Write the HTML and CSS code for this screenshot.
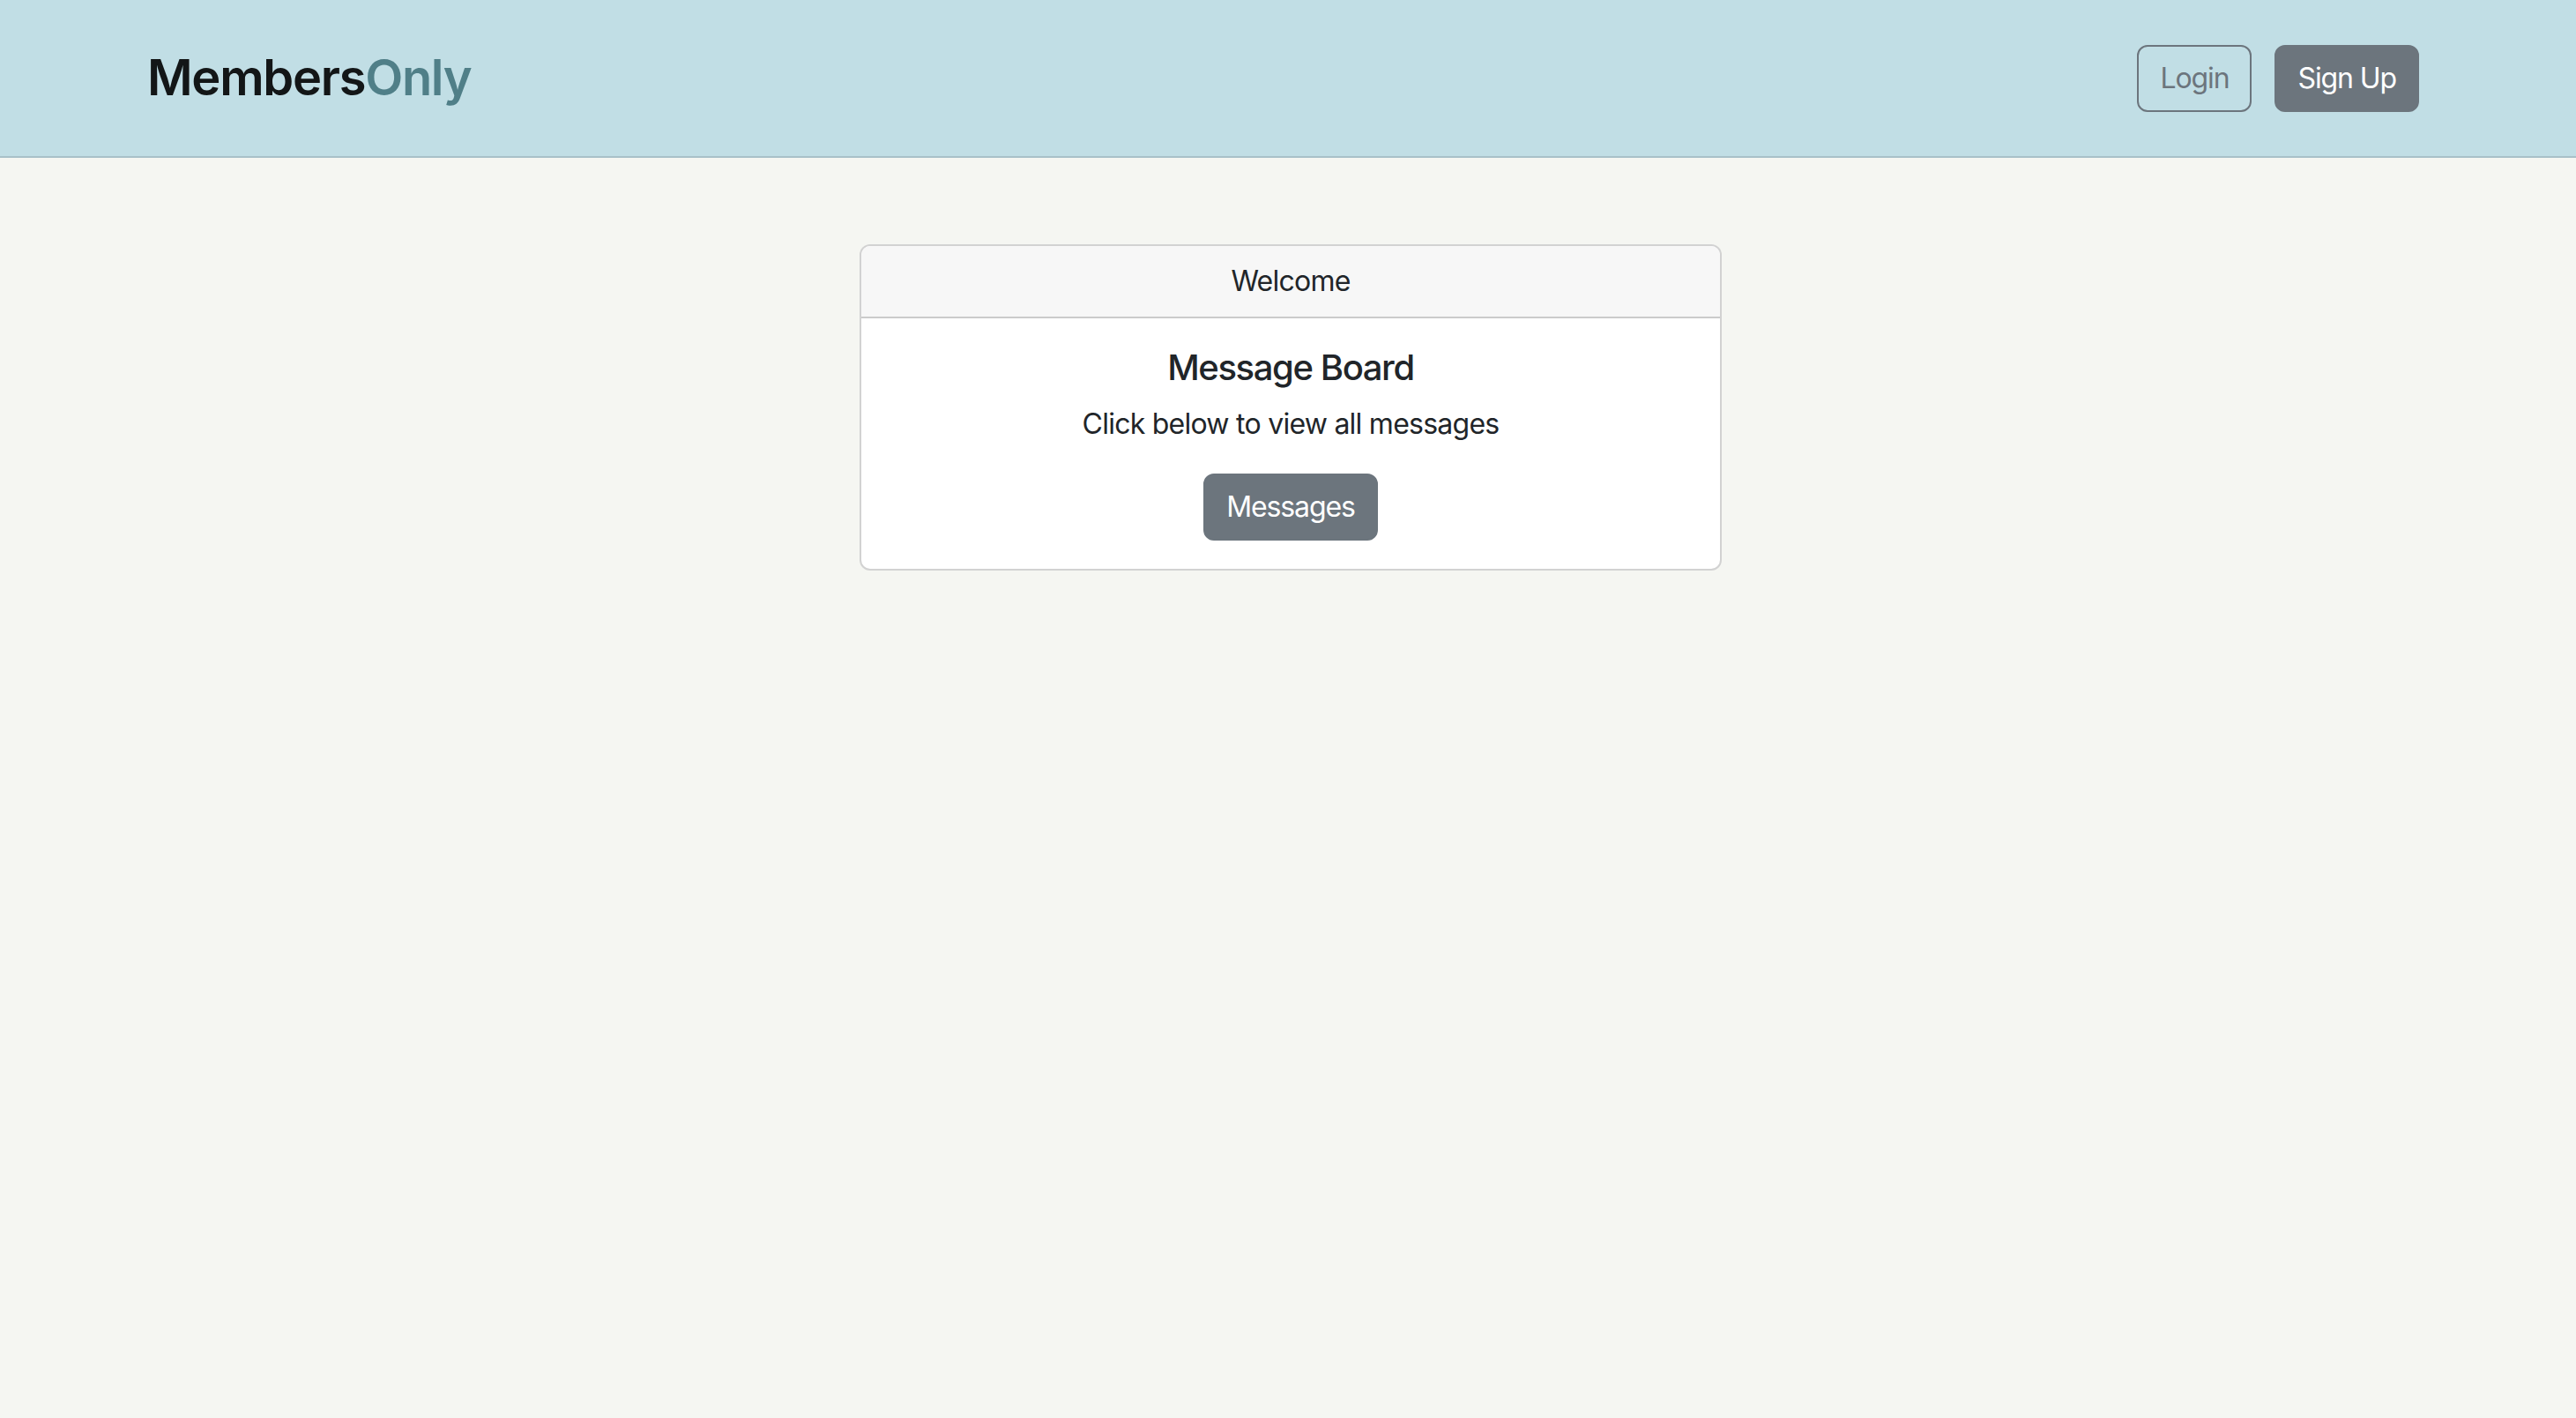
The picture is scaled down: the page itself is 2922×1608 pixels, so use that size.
FILE: index.html
```html
<!DOCTYPE html>
<html lang="en">
<head>
<meta charset="utf-8">
<title>MembersOnly</title>
<link rel="stylesheet" href="styles.css">
</head>
<body>
<header class="topbar">
  <a class="brand" href="#">Members<span class="brand-accent">Only</span></a>
  <nav class="auth">
    <a class="btn btn-outline" href="#">Login</a>
    <a class="btn btn-solid" href="#">Sign Up</a>
  </nav>
</header>
<main class="main">
  <section class="card">
    <div class="card-header">Welcome</div>
    <div class="card-body">
      <h5 class="card-title">Message Board</h5>
      <p class="card-text">Click below to view all messages</p>
      <a class="btn btn-solid" href="#">Messages</a>
    </div>
  </section>
</main>
</body>
</html>
```

FILE: styles.css
```css
* { box-sizing: border-box; }
html, body { margin: 0; padding: 0; }
body {
  background: #f5f6f2;
  color: #212529;
  font-family: Inter, "Noto Sans", "Liberation Sans", sans-serif;
  font-size: 32px;
  line-height: 48px;
  letter-spacing: -0.75px;
  min-height: 1608px;
}
.topbar {
  height: 179px;
  background: #c1dee5;
  border-bottom: 2px solid #a8c1c8;
  display: flex;
  align-items: center;
  justify-content: space-between;
  padding: 0 178px 0 167px;
}
.brand {
  font-size: 56px;
  font-weight: 600;
  color: #131617;
  text-decoration: none;
  letter-spacing: -1.3px;
  margin-top: -2px;
}
.brand-accent { color: #507f88; }
.auth { display: flex; gap: 26px; }
.btn {
  display: inline-block;
  font-size: 32px;
  line-height: 48px;
  padding: 12px 24px;
  border: 2px solid #6c757d;
  border-radius: 12px;
  text-decoration: none;
  text-align: center;
  letter-spacing: -1.1px;
}
.btn-outline { color: #6c757d; background: transparent; }
.btn-solid { color: #fff; background: #6c757d; }
.main { padding-top: 98px; }
.card {
  width: 978px;
  margin-left: calc(50% - 486px);
  background: #fff;
  border: 2px solid rgba(0,0,0,0.175);
  border-radius: 12px;
  overflow: hidden;
}
.card-header {
  background: #f7f7f7;
  border-bottom: 2px solid rgba(0,0,0,0.175);
  padding: 16px 32px;
  text-align: center;
}
.card-body {
  padding: 32px;
  text-align: center;
}
.card-title {
  margin: 0 0 16px;
  font-size: 40px;
  line-height: 48px;
  font-weight: 500;
  letter-spacing: -1.4px;
}
.card-text { margin: 0 0 32px; }
```
